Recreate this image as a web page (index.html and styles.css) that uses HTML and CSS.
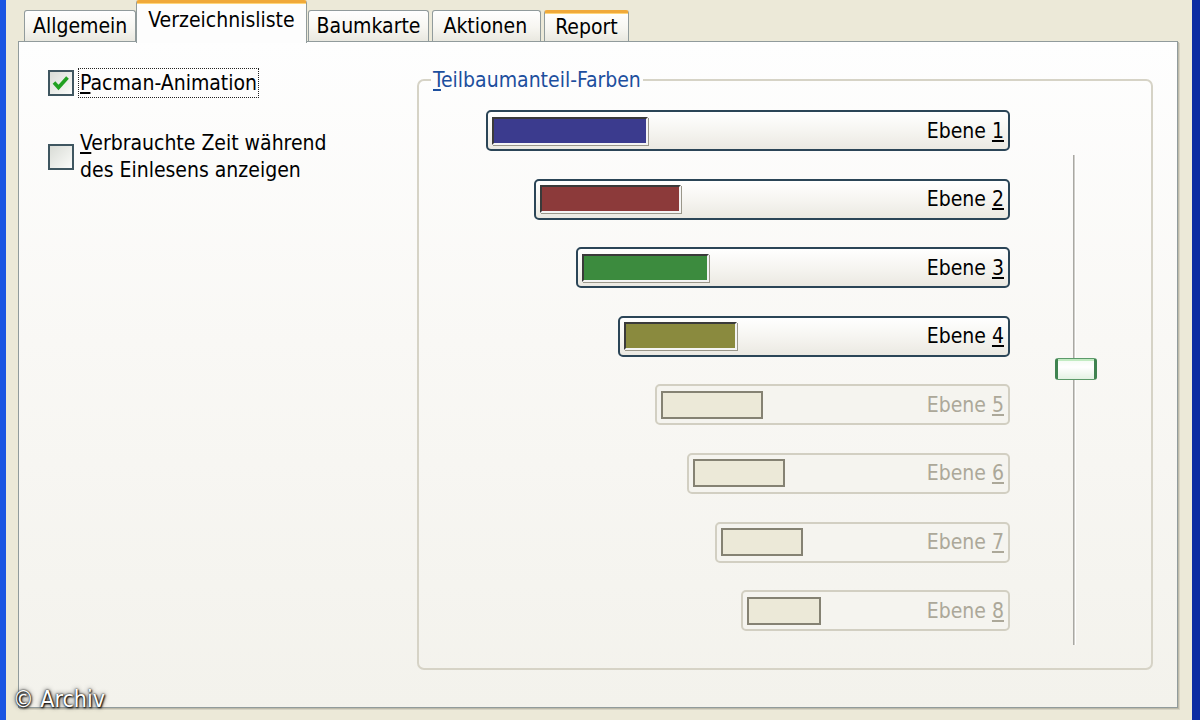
FILE: index.html
```html
<!DOCTYPE html>
<html lang="de">
<head>
    <meta charset="UTF-8">
    <title>Optionen - Verzeichnisliste</title>
    <link rel="stylesheet" href="styles.css">
</head>
<body>
    <div class="window">
        <!-- Tab strip -->
        <div class="tabs">
            <div class="tab">Allgemein</div>
            <div class="tab active">Verzeichnisliste</div>
            <div class="tab">Baumkarte</div>
            <div class="tab">Aktionen</div>
            <div class="tab hot">Report</div>
        </div>

        <div class="panel">
            <div class="options">
                <div class="option">
                    <span class="box">
                        <svg width="22" height="22" viewBox="0 0 22 22">
                            <polyline points="4,10.5 8.5,15.5 17.5,5.5" fill="none" stroke="#21a121" stroke-width="3.6"/>
                        </svg>
                    </span>
                    <span class="label focus"><u>P</u>acman-Animation</span>
                </div>
                <div class="option">
                    <span class="box"></span>
                    <span class="label"><u>V</u>erbrauchte Zeit während<br>des Einlesens anzeigen</span>
                </div>
            </div>

            <fieldset class="group">
                <legend><u>T</u>eilbaumanteil-Farben</legend>
                <div class="group-body">
                    <div class="levels">
                        <div class="level" style="width: 524px"><span class="swatch" style="width: 156px; background: #3b3b8e"></span><span class="name">Ebene <u>1</u></span></div>
                        <div class="level" style="width: 476px"><span class="swatch" style="width: 141px; background: #8c3a3a"></span><span class="name">Ebene <u>2</u></span></div>
                        <div class="level" style="width: 434px"><span class="swatch" style="width: 127px; background: #3c8b3e"></span><span class="name">Ebene <u>3</u></span></div>
                        <div class="level" style="width: 392px"><span class="swatch" style="width: 113px; background: #8a8a3e"></span><span class="name">Ebene <u>4</u></span></div>
                        <div class="level off" style="width: 355px"><span class="swatch" style="width: 102px"></span><span class="name">Ebene <u>5</u></span></div>
                        <div class="level off" style="width: 323px"><span class="swatch" style="width: 92px"></span><span class="name">Ebene <u>6</u></span></div>
                        <div class="level off" style="width: 295px"><span class="swatch" style="width: 82px"></span><span class="name">Ebene <u>7</u></span></div>
                        <div class="level off" style="width: 269px"><span class="swatch" style="width: 74px"></span><span class="name">Ebene <u>8</u></span></div>
                    </div>
                    <div class="slider">
                        <div class="track"></div>
                        <div class="thumb"></div>
                    </div>
                </div>
            </fieldset>
        </div>

        <div class="watermark">© Archiv</div>
    </div>
</body>
</html>
```

FILE: styles.css
```css
/* General Reset */
* {
    margin: 0;
    padding: 0;
    box-sizing: border-box;
}

body {
    font-family: "DejaVu Sans Condensed", "DejaVu Sans", sans-serif;
    font-stretch: condensed;
    font-size: 21px;
    color: #000;
    background-color: #ece9d8;
    width: 1200px;
    height: 720px;
    overflow: hidden;
}

.window {
    position: relative;
    height: 720px;
    border-left: 6px solid #1a55e2;
    border-right: 8px solid #0b2ca3;
    padding: 0 14px 0 12px;
}

/* Tabs */
.tabs {
    display: flex;
    align-items: flex-end;
    height: 41px;
    padding-left: 6px;
}

.tab {
    height: 31px;
    padding: 0 8px 1px;
    margin-right: 3px;
    display: flex;
    align-items: center;
    border: 1px solid #919b9c;
    border-bottom: none;
    border-radius: 3px 3px 0 0;
    background: linear-gradient(#ffffff, #f7f6f1 55%, #e9e8e0);
    white-space: nowrap;
}

.tab.active {
    position: relative;
    z-index: 2;
    height: 43px;
    margin: 0 1px -2px -3px;
    padding: 0 11px 6px;
    border-top: 3px solid #f0a93a;
    background: #fdfdfd;
    box-shadow: inset 0 1px 0 #ffd57a;
}

.tab:nth-child(4) {
    padding: 0 13px 1px 10px;
}

.tab.hot {
    padding: 0 10px 1px;
    border-top: 3px solid #f0a93a;
    box-shadow: inset 0 1px 0 #ffd57a;
}

/* Page */
.panel {
    height: 667px;
    display: flex;
    padding: 26px 24px 0 29px;
    border: 1px solid #919b9c;
    box-shadow: 1px 1px 0 #bdbaa9, 2px 2px 0 #d6d3c4;
    background: linear-gradient(#fefefe, #f9f8f5 45%, #f3f2ec);
}

.options {
    width: 369px;
    flex: none;
    display: flex;
    flex-direction: column;
    gap: 31px;
}

.option {
    display: flex;
    align-items: center;
    gap: 4px;
}

.box {
    width: 26px;
    height: 26px;
    flex: none;
    border: 2px solid #3f5660;
    background: linear-gradient(135deg, #d9dcd6, #f4f5f2 80%, #fbfbfb);
}

.box svg {
    display: block;
}

.label {
    padding: 2px 1px;
    line-height: 24px;
    border: 1px solid transparent;
}

.option:last-child .label {
    line-height: 27px;
    padding: 0 1px;
}

.label.focus {
    border: 1px dotted #222;
}

/* Group box */
.group {
    flex: 1;
    align-self: flex-start;
    min-width: 0;
    border: 2px solid #d6d3c6;
    border-radius: 7px;
    padding: 18px 13px 37px 12px;
}

.group legend {
    padding: 0 2px;
    line-height: 24px;
    color: #1d4f9e;
}

.group-body {
    display: flex;
}

.levels {
    flex: 1;
    display: flex;
    flex-direction: column;
    align-items: flex-end;
    gap: 27.6px;
}

.level {
    height: 41px;
    display: flex;
    align-items: center;
    justify-content: space-between;
    padding: 0 4px;
    border: 2px solid #2b4557;
    border-radius: 5px;
    background: linear-gradient(#ffffff, #f6f5f1 50%, #ebe9e2);
}

.swatch {
    height: 28px;
    border: 2px solid;
    border-color: #3a3a3a #f4f4f4 #f4f4f4 #3a3a3a;
    box-shadow: 1px 1px 0 #9a978a;
}

.name {
    white-space: nowrap;
}

.level.off {
    border-color: #d2cfc2;
    background: #f5f4ef;
    color: #aca899;
}

.level.off .swatch {
    background: #ece9d8;
    border-color: #858273;
    box-shadow: none;
}

/* Trackbar */
.slider {
    position: relative;
    width: 128px;
    height: 490px;
    margin: 45px 0 -14px;
}

.track {
    width: 3px;
    height: 100%;
    margin-left: 63px;
    border-left: 1px solid #a9a8a3;
    border-right: 1px solid #ffffff;
    background: #d0cfca;
}

.thumb {
    position: absolute;
    left: 45px;
    top: 203px;
    width: 42px;
    height: 22px;
    border: 1px solid #5c9a6a;
    border-left: 3px solid #3f8350;
    border-right: 3px solid #3f8350;
    border-radius: 3px;
    background: linear-gradient(#f2fbf2, #ffffff 40%, #e3f2e3);
    box-shadow: inset 0 2px 0 #c2ebc2;
}

/* Watermark */
.watermark {
    position: absolute;
    left: 7px;
    bottom: 8px;
    font-size: 23px;
    color: #ffffff;
    text-shadow: 0 0 2px #000, 1px 1px 2px #000, 0 0 5px #333;
}
```
